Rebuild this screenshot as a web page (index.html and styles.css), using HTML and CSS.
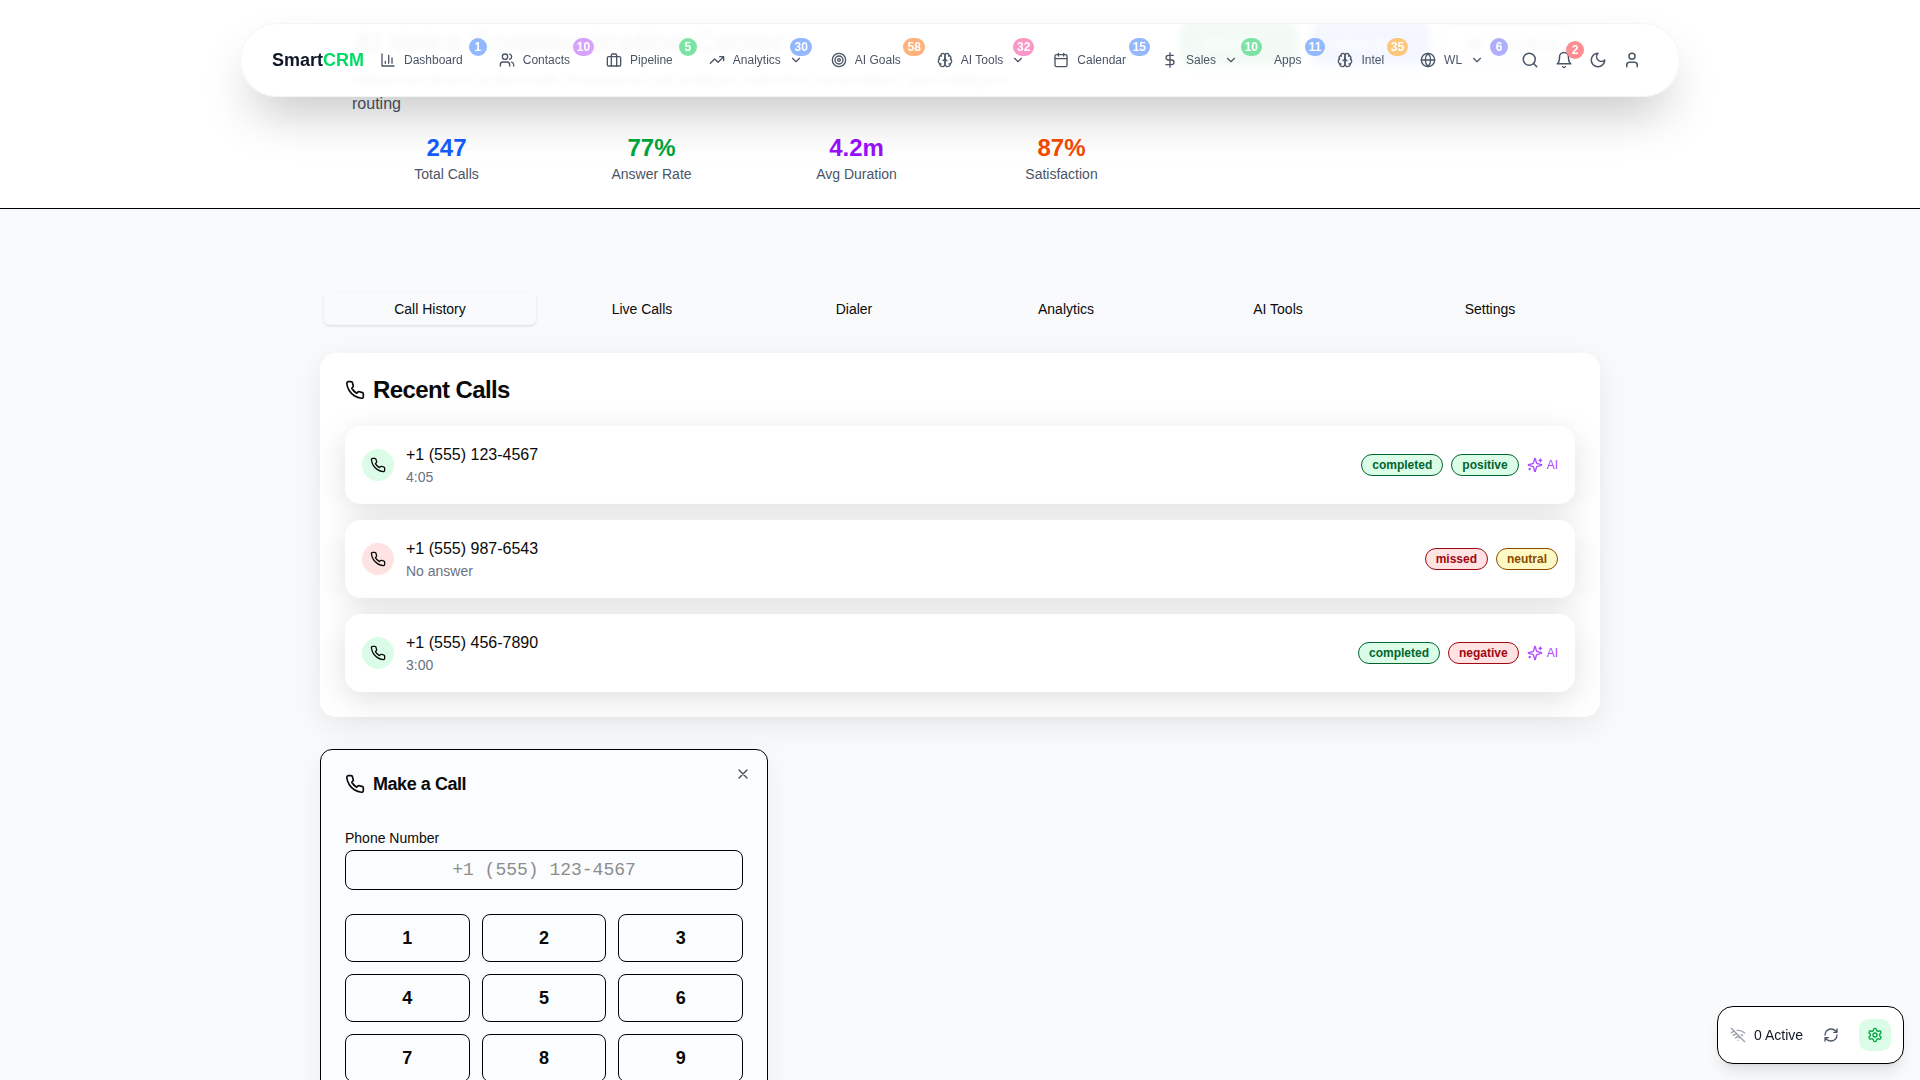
FILE: index.html
```html
<!DOCTYPE html>
<html lang="en">
<head>
<meta charset="utf-8">
<title>AI Voice Communication Center</title>
<link rel="stylesheet" href="styles.css">
</head>
<body>
<svg class="defs" aria-hidden="true">
  <symbol id="i-chart" viewBox="0 0 24 24"><path d="M3 3v18h18M18 17V9M13 17V5M8 17v-3"/></symbol>
  <symbol id="i-users" viewBox="0 0 24 24"><path d="M16 21v-2a4 4 0 0 0-4-4H6a4 4 0 0 0-4 4v2"/><circle cx="9" cy="7" r="4"/><path d="M22 21v-2a4 4 0 0 0-3-3.87M16 3.13a4 4 0 0 1 0 7.75"/></symbol>
  <symbol id="i-brief" viewBox="0 0 24 24"><rect x="2" y="7" width="20" height="14" rx="2"/><path d="M16 21V5a2 2 0 0 0-2-2h-4a2 2 0 0 0-2 2v16"/></symbol>
  <symbol id="i-trend" viewBox="0 0 24 24"><path d="M22 7l-8.5 8.5-5-5L2 17M16 7h6v6"/></symbol>
  <symbol id="i-target" viewBox="0 0 24 24"><circle cx="12" cy="12" r="10"/><circle cx="12" cy="12" r="6"/><circle cx="12" cy="12" r="2"/></symbol>
  <symbol id="i-brain" viewBox="0 0 24 24"><path d="M12 5a3 3 0 1 0-5.997.125 4 4 0 0 0-2.526 5.77 4 4 0 0 0 .556 6.588A4 4 0 1 0 12 18Z"/><path d="M12 5a3 3 0 1 1 5.997.125 4 4 0 0 1 2.526 5.77 4 4 0 0 1-.556 6.588A4 4 0 1 1 12 18Z"/><path d="M15 13a4.5 4.5 0 0 1-3-4 4.5 4.5 0 0 1-3 4"/><path d="M17.599 6.5a3 3 0 0 0 .399-1.375M6.003 5.125A3 3 0 0 0 6.401 6.5M3.477 10.896a4 4 0 0 1 .585-.396M19.938 10.5a4 4 0 0 1 .585.396M6 18a4 4 0 0 1-1.967-.516M19.967 17.484A4 4 0 0 1 18 18"/></symbol>
  <symbol id="i-cal" viewBox="0 0 24 24"><path d="M8 2v4M16 2v4M3 10h18"/><rect x="3" y="4" width="18" height="18" rx="2"/></symbol>
  <symbol id="i-dollar" viewBox="0 0 24 24"><path d="M12 1v22M17 5H9.5a3.5 3.5 0 0 0 0 7h5a3.5 3.5 0 0 1 0 7H6"/></symbol>
  <symbol id="i-globe" viewBox="0 0 24 24"><circle cx="12" cy="12" r="10"/><path d="M12 2a14.5 14.5 0 0 0 0 20 14.5 14.5 0 0 0 0-20M2 12h20"/></symbol>
  <symbol id="i-chev" viewBox="0 0 24 24"><path d="m6 9 6 6 6-6"/></symbol>
  <symbol id="i-search" viewBox="0 0 24 24"><circle cx="11" cy="11" r="8"/><path d="m21 21-4.3-4.3"/></symbol>
  <symbol id="i-bell" viewBox="0 0 24 24"><path d="M6 8a6 6 0 0 1 12 0c0 7 3 9 3 9H3s3-2 3-9M10.3 21a1.94 1.94 0 0 0 3.4 0"/></symbol>
  <symbol id="i-moon" viewBox="0 0 24 24"><path d="M12 3a6 6 0 0 0 9 9 9 9 0 1 1-9-9Z"/></symbol>
  <symbol id="i-user" viewBox="0 0 24 24"><path d="M19 21v-2a4 4 0 0 0-4-4H9a4 4 0 0 0-4 4v2"/><circle cx="12" cy="7" r="4"/></symbol>
  <symbol id="i-phone" viewBox="0 0 24 24"><path d="M22 16.92v3a2 2 0 0 1-2.18 2 19.79 19.79 0 0 1-8.63-3.07 19.5 19.5 0 0 1-6-6 19.79 19.79 0 0 1-3.07-8.67A2 2 0 0 1 4.11 2h3a2 2 0 0 1 2 1.72 12.84 12.84 0 0 0 .7 2.81 2 2 0 0 1-.45 2.11L8.09 9.91a16 16 0 0 0 6 6l1.27-1.27a2 2 0 0 1 2.11-.45 12.84 12.84 0 0 0 2.81.7A2 2 0 0 1 22 16.92z"/></symbol>
  <symbol id="i-spark" viewBox="0 0 24 24"><path d="M9.937 15.5A2 2 0 0 0 8.5 14.063l-6.135-1.582a.5.5 0 0 1 0-.962L8.5 9.936A2 2 0 0 0 9.937 8.5l1.582-6.135a.5.5 0 0 1 .963 0L14.063 8.5A2 2 0 0 0 15.5 9.937l6.135 1.581a.5.5 0 0 1 0 .964L15.5 14.063a2 2 0 0 0-1.437 1.437l-1.582 6.135a.5.5 0 0 1-.963 0z"/><path d="M20 3v4M22 5h-4M4 17v2M5 18H3"/></symbol>
  <symbol id="i-x" viewBox="0 0 24 24"><path d="M18 6 6 18M6 6l12 12"/></symbol>
  <symbol id="i-wifioff" viewBox="0 0 24 24"><path d="M12 20h.01M8.5 16.429a5 5 0 0 1 7 0M5 12.859a10 10 0 0 1 5.17-2.69M19 12.859a10 10 0 0 0-2.007-1.523M2 8.82a15 15 0 0 1 4.177-2.643M22 8.82a15 15 0 0 0-11.288-3.764M2 2l20 20"/></symbol>
  <symbol id="i-refresh" viewBox="0 0 24 24"><path d="M3 12a9 9 0 0 1 9-9 9.75 9.75 0 0 1 6.74 2.74L21 8M21 3v5h-5M21 12a9 9 0 0 1-9 9 9.75 9.75 0 0 1-6.74-2.74L3 16M8 16H3v5"/></symbol>
  <symbol id="i-gear" viewBox="0 0 24 24"><path d="M12.22 2h-.44a2 2 0 0 0-2 2v.18a2 2 0 0 1-1 1.73l-.43.25a2 2 0 0 1-2 0l-.15-.08a2 2 0 0 0-2.73.73l-.22.38a2 2 0 0 0 .73 2.73l.15.1a2 2 0 0 1 1 1.72v.51a2 2 0 0 1-1 1.74l-.15.09a2 2 0 0 0-.73 2.73l.22.38a2 2 0 0 0 2.73.73l.15-.08a2 2 0 0 1 2 0l.43.25a2 2 0 0 1 1 1.73V20a2 2 0 0 0 2 2h.44a2 2 0 0 0 2-2v-.18a2 2 0 0 1 1-1.73l.43-.25a2 2 0 0 1 2 0l.15.08a2 2 0 0 0 2.73-.73l.22-.39a2 2 0 0 0-.73-2.73l-.15-.08a2 2 0 0 1-1-1.74v-.5a2 2 0 0 1 1-1.74l.15-.09a2 2 0 0 0 .73-2.73l-.22-.38a2 2 0 0 0-2.73-.73l-.15.08a2 2 0 0 1-2 0l-.43-.25a2 2 0 0 1-1-1.73V4a2 2 0 0 0-2-2z"/><circle cx="12" cy="12" r="3"/></symbol>
</svg>

<nav class="topnav">
  <a class="logo">Smart<span class="logo-accent">CRM</span></a>
  <div class="nav-items">
    <a class="nav-item"><svg class="ic"><use href="#i-chart"/></svg><span>Dashboard</span><b class="badge b-blue">1</b></a>
    <a class="nav-item"><svg class="ic"><use href="#i-users"/></svg><span>Contacts</span><b class="badge b-purple">10</b></a>
    <a class="nav-item"><svg class="ic"><use href="#i-brief"/></svg><span>Pipeline</span><b class="badge b-green">5</b></a>
    <a class="nav-item tight"><svg class="ic"><use href="#i-trend"/></svg><span>Analytics</span><svg class="chev"><use href="#i-chev"/></svg><b class="badge b-blue">30</b></a>
    <a class="nav-item"><svg class="ic"><use href="#i-target"/></svg><span>AI Goals</span><b class="badge b-orange">58</b></a>
    <a class="nav-item tight"><svg class="ic"><use href="#i-brain"/></svg><span>AI Tools</span><svg class="chev"><use href="#i-chev"/></svg><b class="badge b-pink">32</b></a>
    <a class="nav-item"><svg class="ic"><use href="#i-cal"/></svg><span>Calendar</span><b class="badge b-blue">15</b></a>
    <a class="nav-item"><svg class="ic"><use href="#i-dollar"/></svg><span>Sales</span><svg class="chev"><use href="#i-chev"/></svg><b class="badge b-green">10</b></a>
    <a class="nav-item"><span>Apps</span><b class="badge b-blue">11</b></a>
    <a class="nav-item"><svg class="ic"><use href="#i-brain"/></svg><span>Intel</span><b class="badge b-amber">35</b></a>
    <a class="nav-item"><svg class="ic"><use href="#i-globe"/></svg><span>WL</span><svg class="chev"><use href="#i-chev"/></svg><b class="badge b-indigo">6</b></a>
  </div>
  <div class="nav-tools">
    <button class="tool"><svg class="ic-tool"><use href="#i-search"/></svg></button>
    <button class="tool"><svg class="ic-tool"><use href="#i-bell"/></svg><b class="badge b-red tool-badge">2</b></button>
    <button class="tool"><svg class="ic-tool"><use href="#i-moon"/></svg></button>
    <button class="tool"><svg class="ic-tool"><use href="#i-user"/></svg></button>
  </div>
</nav>

<header class="page-header">
  <div class="header-inner">
    <div class="header-left">
      <h1>AI Voice Communication Center</h1>
      <p class="subtitle">Advanced phone system with AI-powered call analysis, real-time transcription, and intelligent routing</p>
      <div class="stats">
        <div class="stat"><div class="stat-num c-blue">247</div><div class="stat-label">Total Calls</div></div>
        <div class="stat"><div class="stat-num c-green">77%</div><div class="stat-label">Answer Rate</div></div>
        <div class="stat"><div class="stat-num c-purple">4.2m</div><div class="stat-label">Avg Duration</div></div>
        <div class="stat"><div class="stat-num c-orange">87%</div><div class="stat-label">Satisfaction</div></div>
      </div>
    </div>
    <div class="header-actions">
      <button class="act act-green">New Call</button>
      <button class="act act-blue">Voice Bot</button>
      <button class="act act-outline"><svg class="ic"><use href="#i-spark"/></svg>AI Analysis</button>
    </div>
  </div>
</header>

<main class="main">
  <div class="tabs">
    <div class="tab tab-active">Call History</div>
    <div class="tab">Live Calls</div>
    <div class="tab">Dialer</div>
    <div class="tab">Analytics</div>
    <div class="tab">AI Tools</div>
    <div class="tab">Settings</div>
  </div>

  <section class="card">
    <h2 class="card-title"><svg class="ic-title"><use href="#i-phone"/></svg>Recent Calls</h2>
    <div class="call-list">
      <div class="call">
        <div class="call-ic ok"><svg class="ic"><use href="#i-phone"/></svg></div>
        <div class="call-info"><div class="call-num">+1 (555) 123-4567</div><div class="call-sub">4:05</div></div>
        <div class="call-tags"><span class="tag t-green">completed</span><span class="tag t-green">positive</span><span class="ai"><svg class="ic"><use href="#i-spark"/></svg>AI</span></div>
      </div>
      <div class="call">
        <div class="call-ic bad"><svg class="ic"><use href="#i-phone"/></svg></div>
        <div class="call-info"><div class="call-num">+1 (555) 987-6543</div><div class="call-sub">No answer</div></div>
        <div class="call-tags"><span class="tag t-red">missed</span><span class="tag t-yellow">neutral</span></div>
      </div>
      <div class="call">
        <div class="call-ic ok"><svg class="ic"><use href="#i-phone"/></svg></div>
        <div class="call-info"><div class="call-num">+1 (555) 456-7890</div><div class="call-sub">3:00</div></div>
        <div class="call-tags"><span class="tag t-green">completed</span><span class="tag t-red">negative</span><span class="ai"><svg class="ic"><use href="#i-spark"/></svg>AI</span></div>
      </div>
    </div>
  </section>

  <section class="dialer">
    <button class="close"><svg class="ic"><use href="#i-x"/></svg></button>
    <h3 class="dialer-title"><svg class="ic-title"><use href="#i-phone"/></svg>Make a Call</h3>
    <label class="field-label" for="phone">Phone Number</label>
    <input class="phone-input" id="phone" placeholder="+1 (555) 123-4567">
    <div class="keypad">
      <button class="key">1</button><button class="key">2</button><button class="key">3</button>
      <button class="key">4</button><button class="key">5</button><button class="key">6</button>
      <button class="key">7</button><button class="key">8</button><button class="key">9</button>
      <button class="key">*</button><button class="key">0</button><button class="key">#</button>
    </div>
  </section>
</main>

<aside class="widget">
  <svg class="ic w-off"><use href="#i-wifioff"/></svg>
  <span class="w-label">0 Active</span>
  <button class="w-refresh"><svg class="ic"><use href="#i-refresh"/></svg></button>
  <button class="w-gear"><svg class="ic"><use href="#i-gear"/></svg></button>
</aside>
</body>
</html>
```
FILE: styles.css
```css
* { box-sizing: border-box; }
html, body { height: 100%; overflow: hidden; }
body {
  margin: 0;
  background: #f9fafb;
  color: #0a0a0a;
  font-family: "Liberation Sans", Arial, sans-serif;
  font-size: 16px;
  line-height: 24px;
}
button { font: inherit; color: inherit; background: none; border: 0; padding: 0; }
h1, h2, h3, p { margin: 0; }
.defs { position: absolute; width: 0; height: 0; }
svg { fill: none; stroke: currentColor; stroke-width: 2; stroke-linecap: round; stroke-linejoin: round; flex: none; display: block; }
.ic { width: 16px; height: 16px; }
.chev { width: 14px; height: 14px; margin-left: 8px; }
.ic-tool { width: 18px; height: 18px; }
.ic-title { width: 20px; height: 20px; }

/* top navigation */
.topnav {
  position: fixed;
  top: 23px;
  left: 240px;
  right: 240px;
  height: 74px;
  z-index: 10;
  display: flex;
  align-items: center;
  padding: 0 32px 0 31px;
  background: rgba(255, 255, 255, .95);
  border: 1px solid rgba(0, 0, 0, .04);
  border-radius: 37px;
  box-shadow: 0 25px 50px -12px rgba(0, 0, 0, .25);
  backdrop-filter: blur(3px);
}
.logo { width: 96px; font-size: 18px; font-weight: 700; color: #101828; }
.logo-accent { color: #00dc64; }
.nav-items { display: flex; gap: 12px; align-items: center; }
.nav-item {
  position: relative;
  display: flex;
  align-items: center;
  height: 32px;
  padding: 0 12px;
  font-size: 12px;
  line-height: 16px;
  color: #4a5565;
}
.nav-item .ic { margin-right: 8px; }
.nav-item.tight { padding-right: 4px; }
.badge {
  position: absolute;
  top: -6px;
  right: -12px;
  min-width: 18px;
  height: 18px;
  padding: 0 4px;
  border-radius: 9px;
  font-size: 12px;
  line-height: 18px;
  font-weight: 700;
  color: #fff;
  text-align: center;
}
.nav-item.tight .badge { right: -5px; }
.b-blue { background: #93b8fd; }
.b-purple { background: #d7a3fa; }
.b-green { background: #7be3a3; }
.b-orange { background: #fdb27d; }
.b-pink { background: #fa97c8; }
.b-amber { background: #fdc87c; }
.b-indigo { background: #aeaefc; }
.b-red { background: #fe8d92; }
.nav-tools { display: flex; margin-left: auto; margin-right: -2px; color: #4a5565; }
.tool { position: relative; width: 34px; height: 34px; display: flex; align-items: center; justify-content: center; color: #4a5565; }
.tool-badge { top: -2px; right: -3px; }

/* page header */
.page-header { background: #fff; border-bottom: 1px solid #000; height: 209px; }
.header-inner { width: 1280px; margin: 0 auto; padding: 24px 32px; display: flex; gap: 24px; }
.header-left { width: 804px; flex: none; }
h1 { font-size: 30px; line-height: 36px; font-weight: 700; letter-spacing: -.75px; color: #6b7280; }
.subtitle { margin-top: 8px; width: 672px; color: #4a5565; }
.stats { margin-top: 16px; display: grid; grid-template-columns: repeat(4, 1fr); gap: 16px; }
.stat { text-align: center; }
.stat-num { font-size: 24px; line-height: 32px; font-weight: 700; }
.stat-label { font-size: 14px; line-height: 20px; color: #4a5565; }
.c-blue { color: #155dfc; }
.c-green { color: #00a63e; }
.c-purple { color: #9810fa; }
.c-orange { color: #f54900; }
.header-actions { display: flex; gap: 14px; height: 40px; }
.act { height: 40px; padding: 0 22px; border-radius: 8px; font-size: 14px; color: #fff; display: flex; align-items: center; gap: 8px; white-space: nowrap; }
.act-green { width: 118px; background: #16a34a; box-shadow: 0 10px 15px -3px rgba(0, 166, 62, .4); }
.act-blue { width: 118px; background: #2563eb; box-shadow: 0 10px 15px -3px rgba(37, 99, 235, .4); }
.act-outline { width: 125px; background: #fff; border: 1px solid #000; color: #0a0a0a; }

/* main */
.main { width: 1280px; margin: 0 auto; padding-top: 80px; }
.tabs { height: 40px; padding: 4px; display: grid; grid-template-columns: repeat(6, 1fr); margin-bottom: 24px; }
.tab { display: flex; align-items: center; justify-content: center; font-size: 14px; line-height: 20px; color: #0a0a0a; border-radius: 6px; }
.tab-active { background: #f9fafb; box-shadow: 0 1px 3px rgba(0, 0, 0, .1), 0 1px 2px -1px rgba(0, 0, 0, .1); }

.card {
  background: #fff;
  border-radius: 16px;
  padding: 25px;
  box-shadow: 0 8px 32px rgba(0, 0, 0, .08);
}
.card-title { display: flex; align-items: center; gap: 8px; font-size: 24px; line-height: 24px; font-weight: 700; letter-spacing: -.6px; margin-bottom: 24px; }
.call-list { display: flex; flex-direction: column; gap: 16px; }
.call {
  height: 78px;
  padding: 0 17px;
  display: flex;
  align-items: center;
  background: #fff;
  border-radius: 16px;
  box-shadow: 0 8px 32px rgba(0, 0, 0, .12);
}
.call-ic { width: 32px; height: 32px; border-radius: 50%; display: flex; align-items: center; justify-content: center; margin-right: 12px; }
.ok { background: #dbfce7; }
.bad { background: #ffe2e2; }
.call-num { font-size: 16px; line-height: 24px; color: #0a0a0a; }
.call-sub { font-size: 14px; line-height: 20px; color: #6a7282; }
.call-tags { margin-left: auto; display: flex; align-items: center; gap: 8px; }
.tag { height: 22px; padding: 0 10px; border-radius: 11px; border: 1px solid; font-size: 12px; line-height: 20px; font-weight: 700; }
.t-green { background: #dbfce7; color: #016630; border-color: #016630; }
.t-red { background: #ffe2e2; color: #9f0712; border-color: #9f0712; }
.t-yellow { background: #fef9c2; color: #894b00; border-color: #894b00; }
.ai { display: flex; align-items: center; gap: 4px; font-size: 12px; line-height: 16px; color: #ad46ff; }

/* dialer */
.dialer {
  position: relative;
  width: 448px;
  height: 400px;
  margin-top: 32px;
  padding: 20px 24px 24px;
  background: #fbfcfd;
  border: 1px solid #000;
  border-radius: 12px;
  box-shadow: 0 8px 32px rgba(0, 0, 0, .06);
}
.dialer-title { display: flex; align-items: center; gap: 8px; font-size: 18px; line-height: 28px; font-weight: 700; letter-spacing: -.45px; margin-bottom: 30px; }
.close { position: absolute; top: 16px; right: 16px; color: #4a4a4a; }
.field-label { display: block; font-size: 14px; line-height: 20px; margin-bottom: 2px; }
.phone-input {
  display: block;
  width: 100%;
  height: 40px;
  border: 1px solid #000;
  border-radius: 8px;
  background: transparent;
  font-family: "Liberation Mono", monospace;
  font-size: 18px;
  text-align: center;
  outline: 0;
}
.phone-input::placeholder { color: #8c8c8c; }
.keypad { margin-top: 24px; display: grid; grid-template-columns: repeat(3, 1fr); gap: 12px; }
.key { height: 48px; border: 1px solid #000; border-radius: 8px; font-size: 18px; font-weight: 700; }

/* floating widget */
.widget {
  position: fixed;
  right: 16px;
  bottom: 16px;
  width: 187px;
  height: 58px;
  display: flex;
  align-items: center;
  padding: 0 12px;
  background: #fff;
  border: 1px solid #000;
  border-radius: 16px;
  box-shadow: 0 10px 15px -3px rgba(0, 0, 0, .1), 0 4px 6px -4px rgba(0, 0, 0, .1);
  font-size: 14px;
}
.w-off { color: #99a1af; margin-right: 8px; }
.w-label { color: #101828; white-space: nowrap; flex: none; }
.w-refresh { margin-left: 20px; color: #4a5565; flex: none; }
.w-gear { margin-left: 20px; width: 32px; height: 32px; border-radius: 10px; background: #dbfce7; color: #00a63e; display: flex; align-items: center; justify-content: center; flex: none; }
```
